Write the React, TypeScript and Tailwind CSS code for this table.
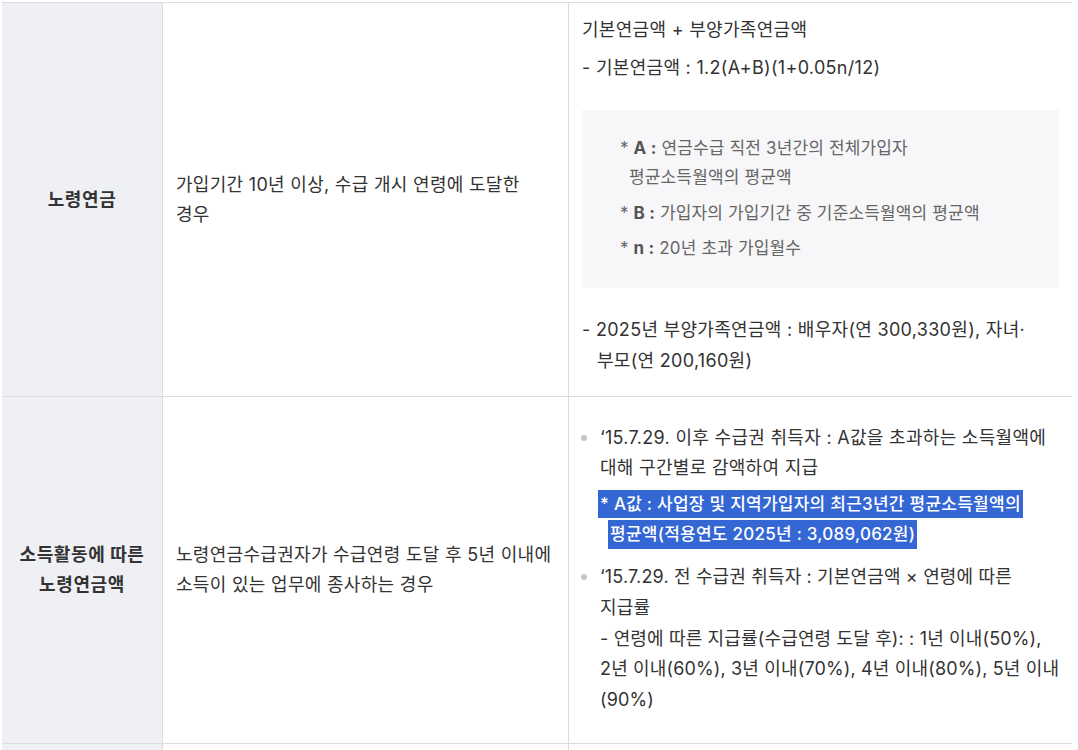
import React from "react";

const Dot = () => (
  <span className="shrink-0 w-[6px] h-[6px] rounded-full bg-[#c4c4c4] mt-[12px] ml-[-1px] mr-[13px]" />
);

export default function App() {
  return (
    <div className="w-[1078px] h-[750px] overflow-hidden bg-white pt-[2px] pl-[2px] font-['Inter','Noto_Sans_CJK_KR',sans-serif] text-[#333]">
      <div className="w-[1070px] border-t border-[#dcdcdc] grid grid-cols-[161px_406px_503px] grid-rows-[394px_347px_40px]">
        {/* Row 1 */}
        <div className="bg-[#eff0f4] border-r border-b border-[#dcdcdc] flex items-center justify-center text-center font-bold text-[18px] tracking-[0.6px] leading-[30px]">
          노령연금
        </div>
        <div className="border-r border-b border-[#dcdcdc] flex items-center pl-[13px] text-[18px] tracking-[0.3px] leading-[30px] whitespace-nowrap">
          <p>
            가입기간 10년 이상, 수급 개시 연령에 도달한
            <br />
            경우
          </p>
        </div>
        <div className="border-b border-[#dcdcdc] pl-[13px] pr-[13px] pt-[12px] text-[18px] tracking-[0.3px] whitespace-nowrap">
          <p className="leading-[30px]">기본연금액 + 부양가족연금액</p>
          <p className="leading-[30px] mt-[8px]">- 기본연금액 : 1.2(A+B)(1+0.05n/12)</p>
          <div className="bg-[#f7f7f9] mt-[27px] pt-[24px] pb-[25px] pl-[38px] text-[17px] tracking-[0.15px] leading-[29px] text-[#666]">
            <p className="pl-[9px] -indent-[9px]">
              * <b className="text-[#555]">A :</b> 연금수급 직전 3년간의 전체가입자
              <br />
              평균소득월액의 평균액
            </p>
            <p className="mt-[7px]">
              * <b className="text-[#555]">B :</b> 가입자의 가입기간 중 기준소득월액의 평균액
            </p>
            <p className="mt-[6px]">
              * <b className="text-[#555]">n :</b> 20년 초과 가입월수
            </p>
          </div>
          <p className="leading-[31px] mt-[26px] pl-[15px] -indent-[15px]">
            - 2025년 부양가족연금액 : 배우자(연 300,330원), 자녀·
            <br />
            부모(연 200,160원)
          </p>
        </div>

        {/* Row 2 */}
        <div className="bg-[#eff0f4] border-r border-b border-[#dcdcdc] flex items-center justify-center text-center font-bold text-[18px] tracking-[0.6px] leading-[30px]">
          <p>
            소득활동에 따른
            <br />
            노령연금액
          </p>
        </div>
        <div className="border-r border-b border-[#dcdcdc] flex items-center pl-[13px] text-[18px] tracking-[0.3px] leading-[30px] whitespace-nowrap">
          <p>
            노령연금수급권자가 수급연령 도달 후 5년 이내에
            <br />
            소득이 있는 업무에 종사하는 경우
          </p>
        </div>
        <div className="border-b border-[#dcdcdc] pl-[13px] pr-[13px] pt-[26px] text-[18px] tracking-[0.3px] whitespace-nowrap">
          <ul>
            <li className="flex">
              <Dot />
              <div>
                <p className="leading-[29.5px]">
                  ‘15.7.29. 이후 수급권 취득자 : A값을 초과하는 소득월액에
                  <br />
                  대해 구간별로 감액하여 지급
                </p>
                <div className="mt-[8px] text-[17px] tracking-[0.25px] font-medium text-white leading-[28px]">
                  <div>
                    <span className="inline-block bg-[#3466d4] ml-[-2px] pl-[2px] pr-[2px]">
                      * A값 : 사업장 및 지역가입자의 최근3년간 평균소득월액의
                    </span>
                  </div>
                  <div className="mt-[2px]">
                    <span className="inline-block bg-[#3466d4] ml-[8px] pl-[2px] pr-[2px] leading-[29px]">
                      평균액(적용연도 2025년 : 3,089,062원)
                    </span>
                  </div>
                </div>
              </div>
            </li>
            <li className="flex mt-[13px]">
              <Dot />
              <p className="leading-[30.75px] tracking-[0.15px]">
                ‘15.7.29. 전 수급권 취득자 : 기본연금액 × 연령에 따른
                <br />
                지급률
                <br />
                - 연령에 따른 지급률(수급연령 도달 후): : 1년 이내(50%),
                <br />
                2년 이내(60%), 3년 이내(70%), 4년 이내(80%), 5년 이내
                <br />
                (90%)
              </p>
            </li>
          </ul>
        </div>

        {/* Row 3 (partially visible) */}
        <div className="bg-[#eff0f4] border-r border-[#dcdcdc]" />
        <div className="border-r border-[#dcdcdc]" />
        <div />
      </div>
    </div>
  );
}
